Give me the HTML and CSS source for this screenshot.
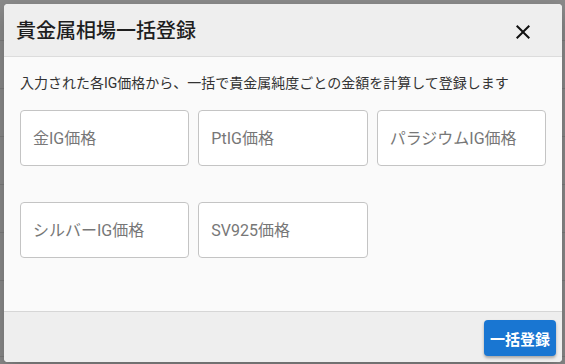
FILE: index.html
```html
<!DOCTYPE html>
<html lang="ja">
<head>
    <meta charset="UTF-8">
    <meta name="viewport" content="width=device-width, initial-scale=1.0">
    <title>貴金属相場一括登録</title>
    <link rel="stylesheet" href="styles.css">
</head>
<body>
    <div class="dialog">
        <div class="dialog-header">
            <h2 class="dialog-title">貴金属相場一括登録</h2>
            <button class="close-btn" aria-label="閉じる">
                <svg viewBox="0 0 24 24" width="24" height="24">
                    <path d="M19 6.41 17.59 5 12 10.59 6.41 5 5 6.41 10.59 12 5 17.59 6.41 19 12 13.41 17.59 19 19 17.59 13.41 12z"></path>
                </svg>
            </button>
        </div>

        <div class="dialog-body">
            <p class="dialog-text">入力された各IG価格から、一括で貴金属純度ごとの金額を計算して登録します</p>
            <div class="field-grid">
                <input class="price-input" type="text" placeholder="金IG価格">
                <input class="price-input" type="text" placeholder="PtIG価格">
                <input class="price-input" type="text" placeholder="パラジウムIG価格">
                <input class="price-input" type="text" placeholder="シルバーIG価格">
                <input class="price-input" type="text" placeholder="SV925価格">
            </div>
        </div>

        <div class="dialog-footer">
            <button class="submit-btn">一括登録</button>
        </div>
    </div>
</body>
</html>
```

FILE: styles.css
```css
body {
    margin: 0;
    height: 364px;
    box-sizing: border-box;
    padding: 4px 3px 2px 4px;
    background-color: #8b8b8b;
    background-image: repeating-linear-gradient(
        to bottom,
        transparent 0,
        transparent 40px,
        #7d7d7d 40px,
        #7d7d7d 41px,
        transparent 41px,
        transparent 48px
    );
    background-position: 0 -48px;
    font-family: Roboto, "Noto Sans CJK JP", sans-serif;
    overflow: hidden;
}

.dialog {
    width: 558px;
    height: 358px;
    display: flex;
    flex-direction: column;
    background-color: #fafafa;
    border-radius: 4px;
    box-shadow: 0 8px 20px rgba(0, 0, 0, 0.25);
    overflow: hidden;
}

.dialog-header {
    height: 52px;
    display: flex;
    align-items: center;
    justify-content: space-between;
    padding: 0 27px 0 12px;
    background-color: #eeeeee;
    border-bottom: 1px solid #dcdcdc;
}

.dialog-title {
    margin: 0;
    font-size: 20px;
    font-weight: 500;
    color: #1e1e1e;
    line-height: 1;
    padding-top: 2px;
}

.close-btn {
    width: 24px;
    height: 24px;
    padding: 0;
    border: none;
    background: none;
    cursor: pointer;
    margin-top: 4px;
}

.close-btn svg {
    display: block;
    fill: #111;
}

.dialog-body {
    flex: 1;
    padding: 16px 16px 0 16px;
}

.dialog-text {
    margin: 0;
    font-size: 14px;
    line-height: 20px;
    color: #333;
}

.field-grid {
    display: grid;
    grid-template-columns: repeat(3, 1fr);
    column-gap: 9px;
    row-gap: 36px;
    margin-top: 17px;
}

.price-input {
    box-sizing: border-box;
    width: 100%;
    height: 56px;
    padding: 0 12px;
    border: 1px solid #c4c4c4;
    border-radius: 4px;
    background-color: #fff;
    font-family: inherit;
    font-size: 16px;
    color: #222;
    outline: none;
}

.price-input::placeholder {
    color: #777;
}

.dialog-footer {
    height: 51px;
    display: flex;
    align-items: flex-start;
    justify-content: flex-end;
    box-sizing: border-box;
    padding: 8px 6px 0 0;
    background-color: #eeeeee;
    border-top: 1px solid #d6d6d6;
}

.submit-btn {
    height: 36px;
    padding: 0 6px;
    border: none;
    border-radius: 4px;
    background-color: #1976d2;
    color: #fff;
    font-family: inherit;
    font-size: 15px;
    font-weight: 700;
    cursor: pointer;
    box-shadow: 0 2px 3px rgba(0, 0, 0, 0.3);
}
```
